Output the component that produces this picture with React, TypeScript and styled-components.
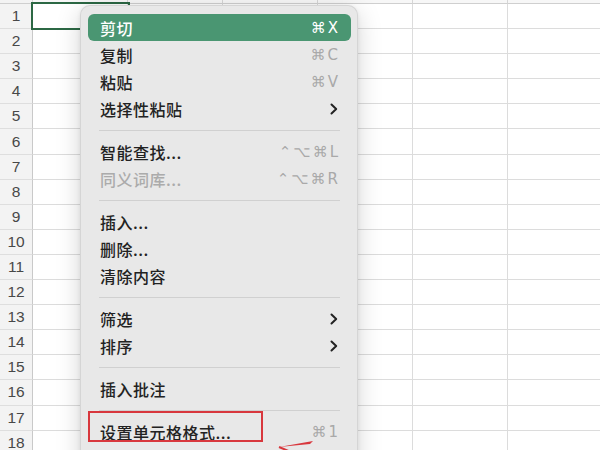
import React from "react";
import styled, { createGlobalStyle } from "styled-components";

const Global = createGlobalStyle`
  html, body { margin: 0; padding: 0; background: #ffffff; }
  body { width: 600px; height: 450px; overflow: hidden; font-family: "Noto Sans CJK SC", "Noto Sans", sans-serif; }
`;

const COLS = 6;
const ROWS = 18;

const Page = styled.div`
  position: relative;
  width: 600px;
  height: 450px;
  overflow: hidden;
  background: #ffffff;
`;

const Sheet = styled.div`
  display: grid;
  grid-template-columns: 33px repeat(${COLS}, 95px);
  grid-auto-rows: 25.1px;
  grid-template-rows: 4px;
`;

const ColHead = styled.div<{ $corner?: boolean }>`
  background: ${(p) => (p.$corner ? "#f3f3f3" : "#f7f7f7")};
  border-right: 1px solid #d6d6d6;
  border-bottom: 1px solid #cfcfcf;
  box-sizing: border-box;
`;

const RowHead = styled.div`
  background: #f3f3f3;
  border-right: 1px solid #c9c9c9;
  border-bottom: 1px solid #dedede;
  box-sizing: border-box;
  display: flex;
  align-items: center;
  justify-content: center;
  font-family: "Liberation Sans", "Noto Sans", sans-serif;
  font-size: 15.5px;
  color: #484848;
`;

const Cell = styled.div<{ $selected?: boolean }>`
  position: relative;
  border-right: 1px solid #dcdcdc;
  border-bottom: 1px solid #dcdcdc;
  box-sizing: border-box;
  &::after {
    content: "";
    display: ${(p) => (p.$selected ? "block" : "none")};
    position: absolute;
    left: -2px;
    top: -2px;
    right: -3px;
    bottom: -2px;
    border: 2px solid #2c6844;
  }
`;

const Menu = styled.div`
  position: absolute;
  left: 80px;
  top: 5px;
  width: 278px;
  height: 470px;
  box-sizing: border-box;
  padding: 8px 6px 0 7px;
  background: #e8e8e8;
  border-radius: 10px;
  border: 1px solid rgba(0, 0, 0, 0.08);
  box-shadow: 0 6px 24px rgba(0, 0, 0, 0.17), 0 1px 4px rgba(0, 0, 0, 0.08);
  display: flex;
  flex-direction: column;
`;

const Item = styled.div<{ $active?: boolean; $disabled?: boolean }>`
  height: 27px;
  flex: none;
  display: flex;
  align-items: center;
  justify-content: space-between;
  padding: 0 13px 0 12px;
  border-radius: 6px;
  background: ${(p) => (p.$active ? "#4a9672" : "transparent")};
  color: ${(p) => (p.$active ? "#ffffff" : p.$disabled ? "#ababab" : "#222222")};
  font-size: 16px;
  font-weight: 500;
  letter-spacing: 0.5px;
`;

const Shortcut = styled.span<{ $active?: boolean }>`
  font-family: "DejaVu Sans", "Liberation Sans", sans-serif;
  font-size: 15px;
  font-weight: 400;
  letter-spacing: 2px;
  margin-right: -2px;
  color: ${(p) => (p.$active ? "#ffffff" : "#a9a9a9")};
`;

const Sep = styled.div`
  height: 16px;
  flex: none;
  display: flex;
  align-items: center;
  padding: 0 11px;
  &::before {
    content: "";
    flex: 1;
    height: 1px;
    background: #d0d0d0;
  }
`;

const Highlight = styled.div`
  position: absolute;
  left: 88px;
  top: 411px;
  width: 175px;
  height: 31px;
  box-sizing: border-box;
  border: 2px solid #d8373d;
`;

const Arrow = styled.svg`
  position: absolute;
  left: 270px;
  top: 436px;
  overflow: visible;
`;

const Chevron = () => (
  <svg width="8" height="12" viewBox="0 0 8 12">
    <path d="M1.5 1.5 L6.2 6 L1.5 10.5" fill="none" stroke="#222" strokeWidth="2" strokeLinecap="round" strokeLinejoin="round" />
  </svg>
);

type Entry =
  | { sep: true }
  | { label: string; sc?: string; sub?: boolean; active?: boolean; disabled?: boolean };

const entries: Entry[] = [
  { label: "剪切", sc: "⌘X", active: true },
  { label: "复制", sc: "⌘C" },
  { label: "粘贴", sc: "⌘V" },
  { label: "选择性粘贴", sub: true },
  { sep: true },
  { label: "智能查找...", sc: "⌃⌥⌘L" },
  { label: "同义词库...", sc: "⌃⌥⌘R", disabled: true },
  { sep: true },
  { label: "插入..." },
  { label: "删除..." },
  { label: "清除内容" },
  { sep: true },
  { label: "筛选", sub: true },
  { label: "排序", sub: true },
  { sep: true },
  { label: "插入批注" },
  { sep: true },
  { label: "设置单元格格式...", sc: "⌘1" },
];

export default function App() {
  const cells: React.ReactNode[] = [];
  cells.push(<ColHead key="c-corner" $corner />);
  for (let c = 0; c < COLS; c++) cells.push(<ColHead key={`c-${c}`} />);
  for (let r = 1; r <= ROWS; r++) {
    cells.push(<RowHead key={`r-${r}`}>{r}</RowHead>);
    for (let c = 0; c < COLS; c++) {
      cells.push(<Cell key={`${r}-${c}`} $selected={r === 1 && c === 0} />);
    }
  }
  return (
    <Page>
      <Global />
      <Sheet>{cells}</Sheet>
      <Menu>
        {entries.map((e, i) =>
          "sep" in e ? (
            <Sep key={i} />
          ) : (
            <Item key={i} $active={e.active} $disabled={e.disabled}>
              <span>{e.label}</span>
              {e.sc ? <Shortcut $active={e.active}>{e.sc}</Shortcut> : e.sub ? <Chevron /> : null}
            </Item>
          )
        )}
      </Menu>
      <Highlight />
      <Arrow width="60" height="30" viewBox="0 0 60 30">
        <path d="M9 11 L43 5 L40 8 Z" fill="#d8373d" />
        <path d="M9 11 L40 24" stroke="#d8373d" strokeWidth="2" fill="none" />
      </Arrow>
    </Page>
  );
}
